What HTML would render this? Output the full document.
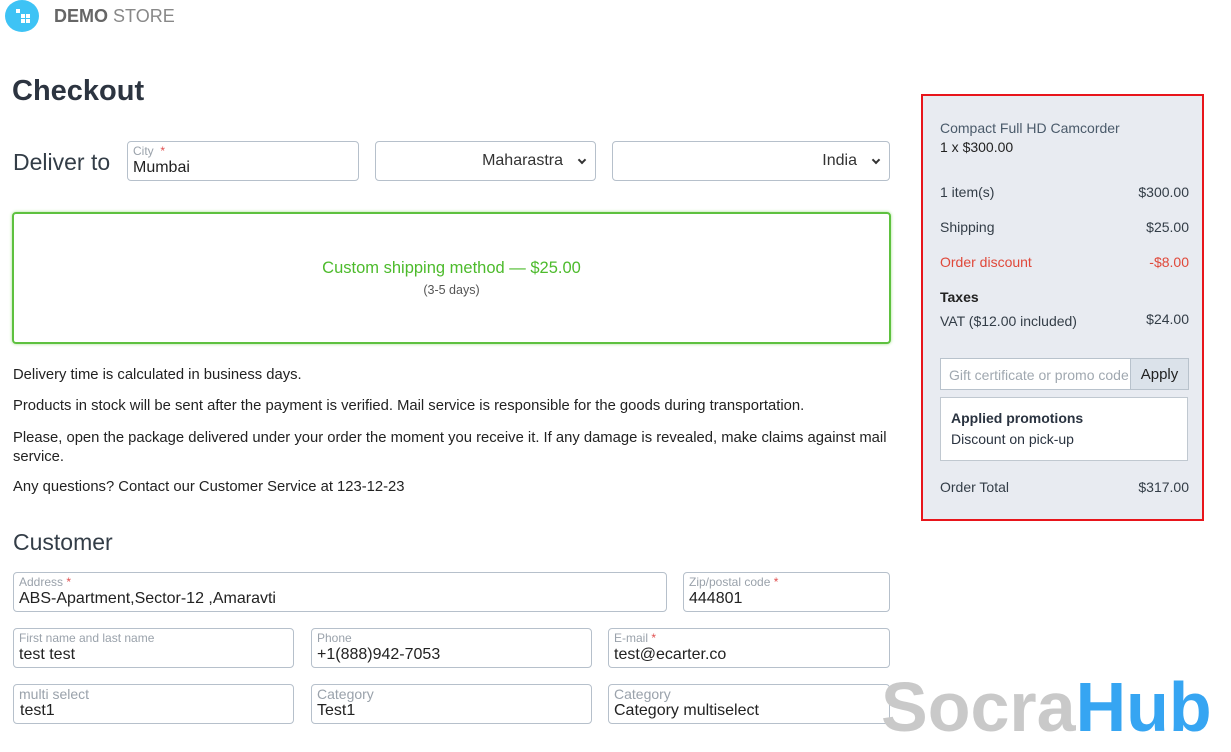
<!DOCTYPE html>
<html><head><meta charset="utf-8">
<style>
*{box-sizing:border-box;margin:0;padding:0}
body{width:1231px;height:743px;overflow:hidden;background:#fff;font-family:"Liberation Sans",sans-serif;color:#333d47;position:relative}
.a{position:absolute}
.f{position:absolute;border:1px solid #b6c0cb;border-radius:4px;background:#fff}
.f .l{position:absolute;left:5px;top:2px;font-size:12px;color:#9aa2ab;white-space:nowrap}
.f .l b{color:#e05050;font-weight:normal}
.f .v{position:absolute;left:5px;top:17px;font-size:16px;color:#222;white-space:nowrap}
.sel{position:absolute;border:1px solid #b6c0cb;border-radius:4px;background:#fff;font-size:16px;color:#333;text-align:right;padding:10px 32px 0 0;height:40px}
.sel:after{content:"";position:absolute;right:10px;top:15px;width:4px;height:4px;border-right:2px solid #333;border-bottom:2px solid #333;transform:rotate(45deg)}
.p{font-size:14.8px;color:#222;position:absolute;left:13px}
.row{position:absolute;left:940px;width:249px;font-size:14px;color:#333d47}
.row span{float:right}
</style></head><body>
<div class="a" style="left:5px;top:0;width:34px;height:32px;border-radius:50%;background:#3ec3f5"></div>
<div class="a" style="left:16px;top:9px;width:4px;height:4px;background:#fff"></div>
<div class="a" style="left:21px;top:14px;width:4px;height:4px;background:#fff"></div>
<div class="a" style="left:26px;top:14px;width:4px;height:4px;background:#fff"></div>
<div class="a" style="left:21px;top:19px;width:4px;height:4px;background:#fff"></div>
<div class="a" style="left:26px;top:19px;width:4px;height:4px;background:#fff"></div>
<div class="a" style="left:54px;top:6px;font-size:18px;color:#666"><b>DEMO</b> <span style="color:#888">STORE</span></div>

<div class="a" style="left:12px;top:75px;font-size:29px;font-weight:bold;color:#2c3440">Checkout</div>
<div class="a" style="left:13px;top:149px;font-size:23px;color:#333d47">Deliver to</div>
<div class="f" style="left:127px;top:141px;width:232px;height:40px"><div class="l">City <b>&nbsp;*</b></div><div class="v">Mumbai</div></div>
<div class="sel" style="left:375px;top:141px;width:221px">Maharastra</div>
<div class="sel" style="left:612px;top:141px;width:278px">India</div>

<div class="a" style="left:12px;top:212px;width:879px;height:132px;border:2px solid #5ec13f;border-radius:4px;box-shadow:0 0 3px #a6e08f"></div>
<div class="a" style="left:12px;top:259px;width:879px;text-align:center;font-size:16.5px;color:#4dbb2c">Custom shipping method — $25.00</div>
<div class="a" style="left:12px;top:283px;width:879px;text-align:center;font-size:12.5px;color:#555">(3-5 days)</div>

<div class="p" style="top:367px">Delivery time is calculated in business days.</div>
<div class="p" style="top:398px">Products in stock will be sent after the payment is verified. Mail service is responsible for the goods during transportation.</div>
<div class="p" style="top:429px;width:880px;line-height:19px">Please, open the package delivered under your order the moment you receive it. If any damage is revealed, make claims against mail service.</div>
<div class="p" style="top:479px">Any questions? Contact our Customer Service at 123-12-23</div>

<div class="a" style="left:13px;top:529px;font-size:23px;color:#333d47">Customer</div>
<div class="f" style="left:13px;top:572px;width:654px;height:40px"><div class="l">Address <b>*</b></div><div class="v">ABS-Apartment,Sector-12 ,Amaravti</div></div>
<div class="f" style="left:683px;top:572px;width:207px;height:40px"><div class="l">Zip/postal code <b>*</b></div><div class="v">444801</div></div>
<div class="f" style="left:13px;top:628px;width:281px;height:40px"><div class="l">First name and last name</div><div class="v">test test</div></div>
<div class="f" style="left:311px;top:628px;width:281px;height:40px"><div class="l">Phone</div><div class="v">+1(888)942-7053</div></div>
<div class="f" style="left:608px;top:628px;width:282px;height:40px"><div class="l">E-mail <b>*</b></div><div class="v">test@ecarter.co</div></div>
<div class="f" style="left:13px;top:684px;width:281px;height:40px"><div class="l" style="font-size:14px;top:1px">multi select</div><div class="v" style="left:6px">test1</div></div>
<div class="f" style="left:311px;top:684px;width:281px;height:40px"><div class="l" style="font-size:14px;top:1px">Category</div><div class="v">Test1</div></div>
<div class="f" style="left:608px;top:684px;width:282px;height:40px"><div class="l" style="font-size:14px;top:1px">Category</div><div class="v">Category multiselect</div></div>

<div class="a" style="left:921px;top:94px;width:283px;height:427px;border:2px solid #e8151b;background:#e8ebf1"></div>
<div class="a" style="left:940px;top:120px;font-size:14px;color:#4a5a6a">Compact Full HD Camcorder</div>
<div class="a" style="left:940px;top:139px;font-size:14px;color:#222">1 x $300.00</div>
<div class="row" style="top:184px">1 item(s)<span>$300.00</span></div>
<div class="row" style="top:219px">Shipping<span>$25.00</span></div>
<div class="row" style="top:254px;color:#e0483a">Order discount<span>-$8.00</span></div>
<div class="row" style="top:289px;font-weight:bold;color:#222">Taxes</div>
<div class="row" style="top:313px">VAT ($12.00 included)<span style="margin-top:-2px">$24.00</span></div>
<div class="a" style="left:940px;top:358px;width:249px;height:32px;border:1px solid #b8c2cc;background:#fff"></div>
<div class="a" style="left:949px;top:367px;font-size:14px;color:#a0a8b0;width:181px;overflow:hidden;white-space:nowrap">Gift certificate or promo code</div>
<div class="a" style="left:1130px;top:358px;width:59px;height:32px;border:1px solid #b8c2cc;background:#dbe2ea;font-size:15px;color:#222;text-align:center;padding-top:7px">Apply</div>
<div class="a" style="left:940px;top:397px;width:248px;height:64px;border:1px solid #c0c8d0;background:#fff"></div>
<div class="a" style="left:951px;top:410px;font-size:14px;font-weight:bold;color:#2a3340">Applied promotions</div>
<div class="a" style="left:951px;top:431px;font-size:14px;color:#2a3340">Discount on pick-up</div>
<div class="row" style="top:479px">Order Total<span>$317.00</span></div>

<div class="a" style="left:881px;top:662px;font-size:70px;font-weight:bold;line-height:90px;white-space:nowrap"><span style="color:#c9c9c9">Socra</span><span style="color:#36a5f2">Hub</span></div>
</body></html>
